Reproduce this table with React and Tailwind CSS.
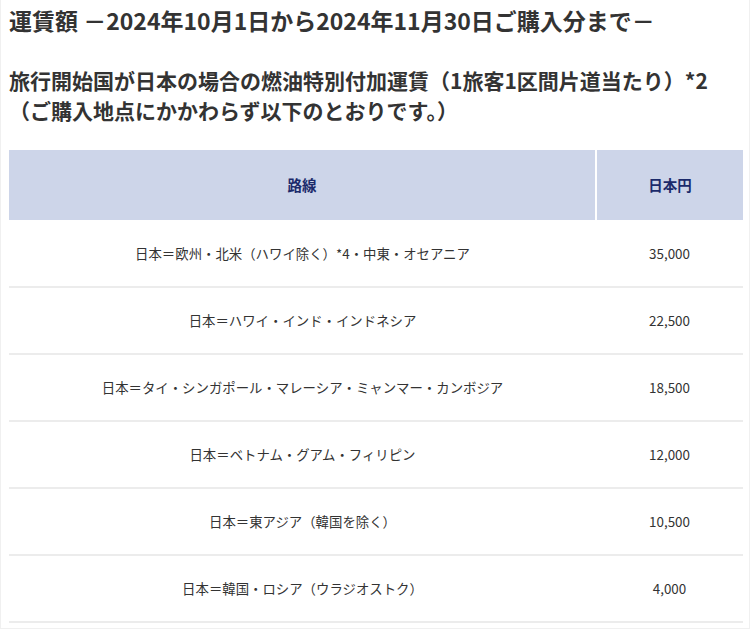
import React from 'react';

const rows = [
  { route: '日本＝欧州・北米（ハワイ除く）*4・中東・オセアニア', yen: '35,000' },
  { route: '日本＝ハワイ・インド・インドネシア', yen: '22,500' },
  { route: '日本＝タイ・シンガポール・マレーシア・ミャンマー・カンボジア', yen: '18,500' },
  { route: '日本＝ベトナム・グアム・フィリピン', yen: '12,000' },
  { route: '日本＝東アジア（韓国を除く）', yen: '10,500' },
  { route: '日本＝韓国・ロシア（ウラジオストク）', yen: '4,000' },
];

const App = () => {
  return (
    <div
      className="w-[750px] h-[629px] overflow-hidden bg-white text-[#333] border-x border-b border-[#f0f0f0]"
      style={{ fontFamily: '"Noto Sans CJK JP", "Noto Sans", sans-serif' }}
    >
      <div className="px-[8px] pt-[4px]">
        <h2 className="text-[23px] font-bold leading-[32px]">
          運賃額 －2024年10月1日から2024年11月30日ご購入分まで－
        </h2>

        <h3 className="mt-[29px] text-[21px] font-bold leading-[30px]">
          旅行開始国が日本の場合の燃油特別付加運賃（1旅客1区間片道当たり）*2
          <br />
          （ご購入地点にかかわらず以下のとおりです。）
        </h3>

        <table className="mt-[25px] w-[734px] border-collapse text-[13.4px]">
          <thead>
            <tr className="bg-[#cdd5e9] text-[#1b2a6b]">
              <th className="h-[70px] w-[587px] border-r-2 border-white font-bold text-[14.5px]">路線</th>
              <th className="h-[70px] font-bold text-[14.5px]">日本円</th>
            </tr>
          </thead>
          <tbody>
            {rows.map((r) => (
              <tr key={r.yen} className="border-b-2 border-[#ececec]">
                <td className="h-[67px] text-center">{r.route}</td>
                <td className="h-[67px] text-center">{r.yen}</td>
              </tr>
            ))}
          </tbody>
        </table>
      </div>
    </div>
  );
};

export default App;
